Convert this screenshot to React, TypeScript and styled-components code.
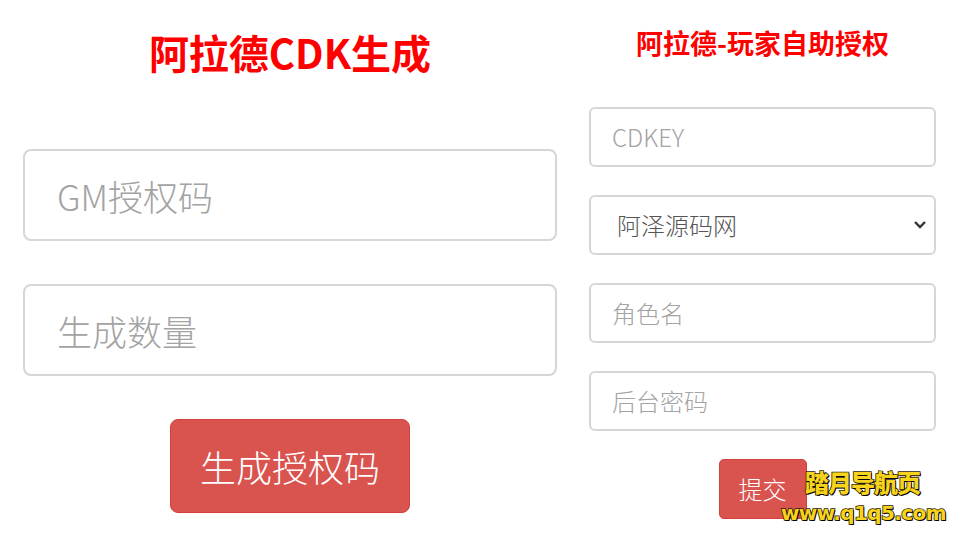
import React from "react";
import styled, { createGlobalStyle } from "styled-components";

const GlobalStyle = createGlobalStyle`
  html, body {
    margin: 0;
    padding: 0;
    background: #fff;
    font-family: "Noto Sans CJK SC", "Noto Sans", sans-serif;
  }
`;

const Page = styled.div`
  position: relative;
  width: 960px;
  height: 540px;
  overflow: hidden;
  display: flex;
  gap: 32px;
  padding-left: 23px;
  box-sizing: border-box;
`;

const Column = styled.div<{ $width: number; $top: number }>`
  width: ${(p) => p.$width}px;
  padding-top: ${(p) => p.$top}px;
  display: flex;
  flex-direction: column;
  align-items: center;
`;

const Title = styled.h1<{ $size: number; $gap: number }>`
  margin: 0 0 ${(p) => p.$gap}px;
  font-size: ${(p) => p.$size}px;
  line-height: 1.25;
  font-weight: 700;
  color: #ff0000;
  white-space: nowrap;
`;

const Fields = styled.div<{ $gap: number }>`
  width: 100%;
  display: flex;
  flex-direction: column;
  align-items: center;
  gap: ${(p) => p.$gap}px;
`;

const Input = styled.input<{ $big?: boolean }>`
  width: 100%;
  box-sizing: border-box;
  height: ${(p) => (p.$big ? 92 : 60)}px;
  padding: 0 ${(p) => (p.$big ? 32 : 21)}px;
  border: 2px solid #d6d6d6;
  border-radius: ${(p) => (p.$big ? 8 : 6)}px;
  font-family: "Noto Sans CJK SC", "Noto Sans", sans-serif;
  font-size: ${(p) => (p.$big ? 35 : 24)}px;
  font-weight: 300;
  color: #555;
  background: #fff;
  outline: none;

  &::placeholder {
    color: #a3a3a3;
  }
`;

const SelectWrap = styled.div`
  position: relative;
  width: 100%;
`;

const Select = styled.select`
  width: 100%;
  height: 60px;
  box-sizing: border-box;
  padding: 0 40px 0 26px;
  border: 2px solid #d6d6d6;
  border-radius: 6px;
  appearance: none;
  background: #fff;
  font-family: "Noto Sans CJK SC", "Noto Sans", sans-serif;
  font-size: 24px;
  font-weight: 300;
  color: #555;
  outline: none;
`;

const Chevron = styled.svg`
  position: absolute;
  right: 9px;
  top: 50%;
  margin-top: -6px;
  width: 14px;
  height: 12px;
  pointer-events: none;
`;

const Button = styled.button<{ $big?: boolean }>`
  width: ${(p) => (p.$big ? 240 : 88)}px;
  height: ${(p) => (p.$big ? 94 : 60)}px;
  border: 1px solid #d43f3a;
  border-radius: ${(p) => (p.$big ? 8 : 5)}px;
  background: #d9534f;
  color: #fff;
  font-family: "Noto Sans CJK SC", "Noto Sans", sans-serif;
  font-size: ${(p) => (p.$big ? 36 : 24)}px;
  font-weight: 300;
  padding: 0;
`;

const Watermark = styled.div`
  position: absolute;
  left: 776px;
  top: 462px;
  display: flex;
  flex-direction: column;
  align-items: flex-end;
  width: 170px;
  font-family: "Noto Sans CJK SC", "Noto Sans", sans-serif;
  font-weight: 900;
  color: #f7d31c;
  -webkit-text-stroke: 1.5px #2a2200;
  paint-order: stroke fill;
  text-shadow: 1px 1px 0 #000;
`;

const MarkName = styled.span`
  font-size: 24px;
  line-height: 40px;
  letter-spacing: -1px;
  margin-right: 26px;
`;

const MarkUrl = styled.span`
  font-family: "DejaVu Sans", sans-serif;
  font-size: 20px;
  line-height: 22px;
  letter-spacing: -0.6px;
`;

export default function App() {
  return (
    <>
      <GlobalStyle />
      <Page>
        <Column $width={534} $top={27}>
          <Title $size={40} $gap={72}>
            阿拉德CDK生成
          </Title>
          <Fields $gap={43}>
            <Input $big placeholder="GM授权码" />
            <Input $big placeholder="生成数量" />
            <Button $big>生成授权码</Button>
          </Fields>
        </Column>
        <Column $width={347} $top={26}>
          <Title $size={27} $gap={47}>
            阿拉德-玩家自助授权
          </Title>
          <Fields $gap={28}>
            <Input placeholder="CDKEY" />
            <SelectWrap>
              <Select defaultValue="azy">
                <option value="azy">阿泽源码网</option>
              </Select>
              <Chevron viewBox="0 0 14 12">
                <path d="M2 3 L7 8 L12 3" fill="none" stroke="#333" strokeWidth="2.4" />
              </Chevron>
            </SelectWrap>
            <Input placeholder="角色名" />
            <Input placeholder="后台密码" />
            <Button>提交</Button>
          </Fields>
        </Column>
        <Watermark>
          <MarkName>踏月导航页</MarkName>
          <MarkUrl>www.q1q5.com</MarkUrl>
        </Watermark>
      </Page>
    </>
  );
}
